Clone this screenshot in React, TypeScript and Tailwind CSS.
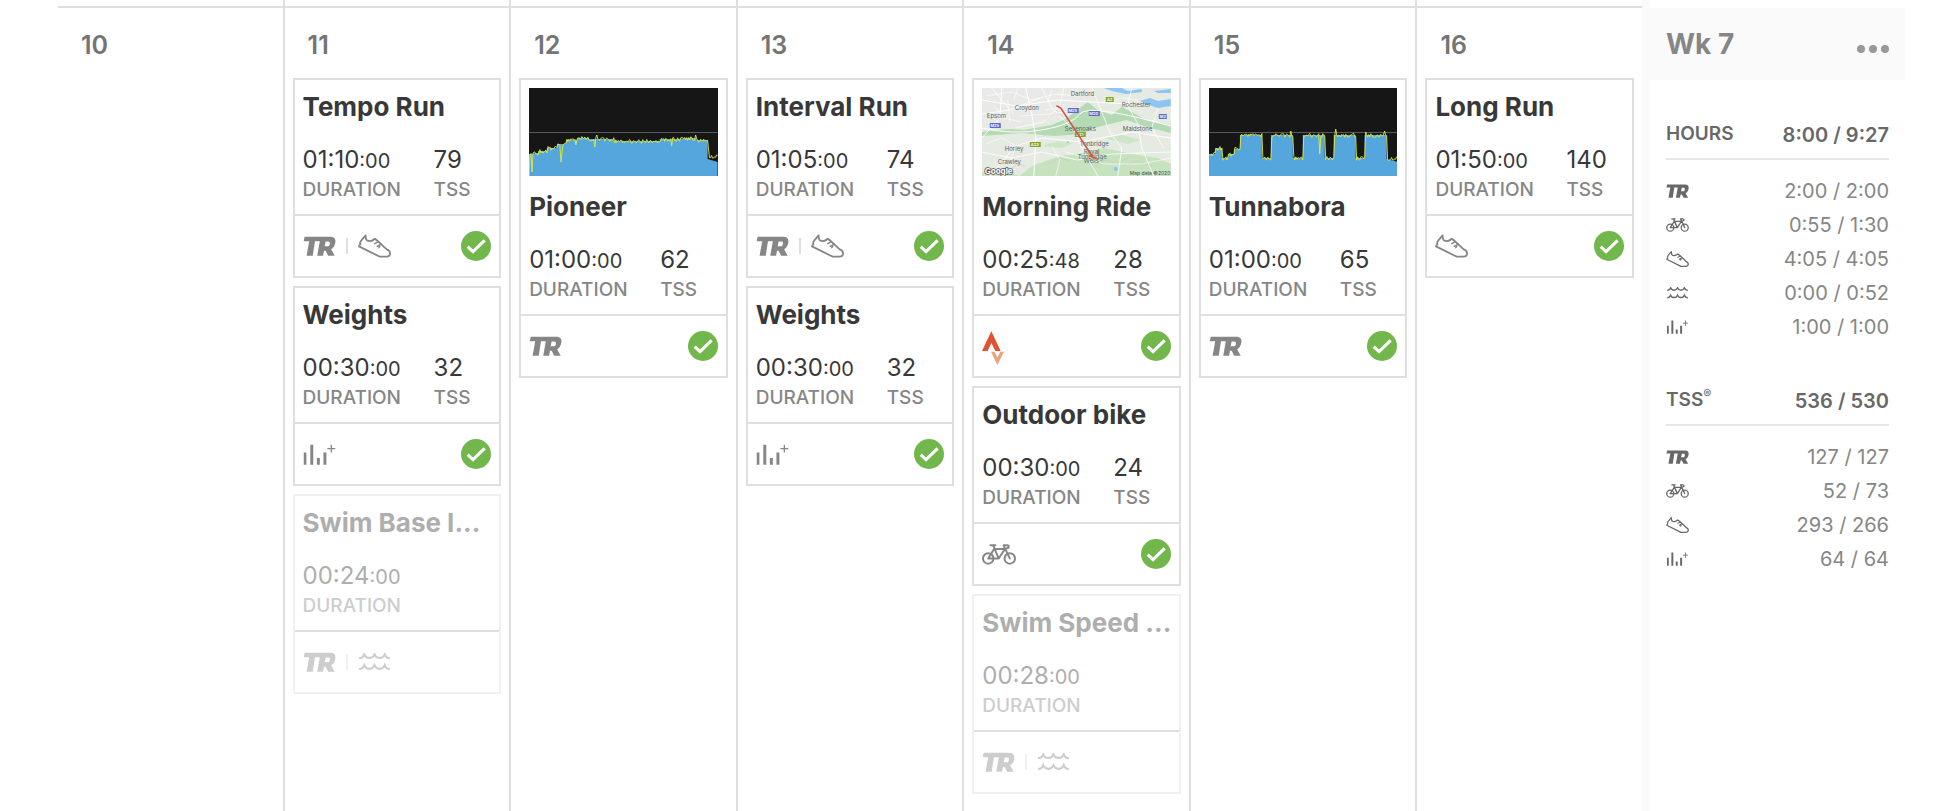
import type { ReactNode } from "react";

type IconName = "tr" | "bike" | "run" | "swim" | "weights" | "strava";

type Workout = {
  title: string;
  time: string;
  seconds: string;
  tss?: string;
  icons: IconName[];
  done: boolean;
  preview?: ReactNode;
};

function TrIcon({ className }: { className: string }) {
  return (
    <svg viewBox="0 0 100 62" className={className} fill="currentColor" fillRule="evenodd" aria-hidden="true">
      <path d="M4 2H84C96 2 101 9 99 21C97 32 93 37 86 41L97 61H77L69 46H64L61 61H43L51 16H36L29 61H10L18 16H1ZM69 17L66 32H75C80 32 82 29 82 24C83 19 81 17 77 17Z" />
    </svg>
  );
}

function RunIcon({ className }: { className: string }) {
  return (
    <svg viewBox="0 0 100 70" className={className} fill="none" stroke="currentColor" strokeWidth="5.5" strokeLinejoin="round" strokeLinecap="round" aria-hidden="true">
      <path d="M23 3C23 12 24 17 29 19C38 22 45 19 51 13L60 20L87 45C96 48 98 53 97 60C96 65 92 67 87 67H65L3 36L7 30C5 24 7 21 11 17Z" />
      <path d="M51 28L62 22M58 36L70 29M63 40L66 36" strokeWidth="4.5" />
    </svg>
  );
}

function BikeIcon({ className }: { className: string }) {
  return (
    <svg viewBox="0 0 104 64" className={className} fill="none" stroke="currentColor" strokeWidth="6" strokeLinejoin="round" strokeLinecap="round" aria-hidden="true">
      <circle cx="19" cy="44" r="16" />
      <circle cx="85" cy="44" r="16" />
      <path d="M19 44L37 15H70L51 44L34 4M26 4H41M19 44H51M85 44L66 4H77C83 4 84 13 76 13" />
    </svg>
  );
}

function SwimIcon({ className }: { className: string }) {
  return (
    <svg viewBox="0 0 100 56" className={className} fill="none" stroke="currentColor" strokeWidth="6.5" aria-hidden="true">
      <path d="M2 16C10 16 15 12 18 4C24 19 44 19 50 4C56 19 76 19 82 4C85 12 90 16 98 16" />
      <path d="M2 50C10 50 15 46 18 38C24 53 44 53 50 38C56 53 76 53 82 38C85 46 90 50 98 50" />
    </svg>
  );
}

function WeightsIcon({ className }: { className: string }) {
  return (
    <svg viewBox="0 0 100 64" className={className} fill="currentColor" aria-hidden="true">
      <path d="M2 26H10V63H2ZM22 2H31V63H22ZM42 43H51V63H42ZM62 26H71V63H62ZM84 2H88V12H98V16H88V26H84V16H74V12H84Z" />
    </svg>
  );
}

function StravaIcon({ className }: { className: string }) {
  return (
    <svg viewBox="0 0 66 102" className={className} aria-hidden="true">
      <path d="M28 1L56 60H40L28 36L17 60H0Z" fill="#e0532f" />
      <path d="M27 62H38L46 79L55 62H66L46 102Z" fill="#eca47e" />
    </svg>
  );
}

function CardIcon({ name }: { name: IconName }) {
  if (name === "tr") return <TrIcon className="h-5 w-[33px]" />;
  if (name === "bike") return <BikeIcon className="h-[21px] w-[34px]" />;
  if (name === "run") return <RunIcon className="h-6 w-[33px]" />;
  if (name === "swim") return <SwimIcon className="h-[18px] w-[33px]" />;
  if (name === "weights") return <WeightsIcon className="h-[21px] w-[33px]" />;
  return <StravaIcon className="mt-1 h-[34px] w-[22px]" />;
}

function RowIcon({ name }: { name: IconName }) {
  if (name === "tr") return <TrIcon className="h-[14px] w-[23px]" />;
  if (name === "bike") return <BikeIcon className="h-[14px] w-[23px]" />;
  if (name === "run") return <RunIcon className="h-4 w-[23px]" />;
  if (name === "swim") return <SwimIcon className="h-3 w-[23px]" />;
  return <WeightsIcon className="h-[14px] w-[23px]" />;
}

function DoneBadge() {
  return (
    <svg viewBox="0 0 90 90" className="h-[30px] w-[30px]" role="img" aria-label="Completed">
      <circle cx="45" cy="45" r="45" fill="#72b74c" />
      <path d="M20 47L36 62L71 28" fill="none" stroke="#fff" strokeWidth="9" />
    </svg>
  );
}

type Point = [number, number];

function heightAt(target: Point[], x: number) {
  for (let i = 1; i < target.length; i++) {
    const [x0, y0] = target[i - 1];
    const [x1, y1] = target[i];
    if (x <= x1 && x1 > x0) return y0 + ((y1 - y0) * (x - x0)) / (x1 - x0);
  }
  return target[target.length - 1][1];
}

function PowerChart({ target, spikes, tail }: { target: Point[]; spikes: Record<number, number>; tail: number }) {
  let seed = 11;
  const line: string[] = [];
  for (let x = 0; x <= 189; x++) {
    seed = (seed * 73 + 41) % 233;
    const base = x > 180 ? tail : heightAt(target, x);
    const y = x in spikes ? spikes[x] : base + (seed / 233 - 0.4) * 4;
    line.push(`${x},${y.toFixed(1)}`);
  }
  const area = `0,88 ${target.map((p) => p.join(",")).join(" ")} 189,88`;
  return (
    <svg viewBox="0 0 189 88" preserveAspectRatio="none" className="block h-[88px] w-full bg-[#161616]" aria-hidden="true">
      <path d="M0 44.5H189" stroke="#59595c" strokeWidth="1" />
      <polygon points={area} fill="#54a6dd" />
      <polyline points={line.join(" ")} fill="none" stroke="#e2ea38" strokeWidth="0.9" />
    </svg>
  );
}

const pioneer: Point[] = [
  [0, 66], [9, 65], [9, 63], [18, 63], [18, 60], [28, 60], [28, 56], [37, 56], [37, 52], [48, 52], [48, 50],
  [60, 50], [60, 51], [85, 51], [85, 53], [131, 53], [131, 51], [150, 51], [160, 50], [168, 50], [168, 52], [179, 52], [179, 71], [189, 74],
];

const tunnabora: Point[] = [
  [0, 66], [6, 66], [6, 60], [13, 60], [13, 70], [19, 70], [19, 66], [25, 66], [25, 61], [31, 61], [31, 47],
  [53, 47], [53, 70], [62, 70], [62, 47], [84, 47], [84, 70], [94, 70], [94, 47], [116, 47], [116, 70],
  [125, 70], [125, 47], [147, 47], [147, 70], [156, 70], [156, 47], [178, 47], [178, 71], [189, 74],
];

const places: [string, number, number][] = [
  ["Croydon", 33, 22], ["Dartford", 89, 8], ["Epsom", 5, 30], ["Rochester", 140, 19], ["Maidstone", 141, 43],
  ["Sevenoaks", 83, 43], ["Tonbridge", 98, 58], ["Royal", 102, 66], ["Tunbridge", 96, 71], ["Wells", 102, 75],
  ["Horley", 23, 63], ["Crawley", 16, 76],
];

const roads: [string, number, number, string][] = [
  ["M25", 86, 20, "#6068c8"], ["M20", 107, 23, "#6068c8"], ["M25", 8, 35, "#6068c8"], ["M2", 177, 26, "#6068c8"],
  ["A2", 124, 9, "#88a226"], ["A21", 93, 44, "#88a226"], ["A23", 48, 54, "#88a226"],
];

function RideMap() {
  return (
    <svg viewBox="0 0 189 88" preserveAspectRatio="xMidYMid slice" className="block h-[88px] w-full" role="img" aria-label="Route map">
      <rect width="189" height="88" fill="#e5ebe2" />
      <path d="M0 0H110V20L80 32L30 38L0 42Z" fill="#e9eae8" />
      <path d="M0 44Q20 40 42 42L70 37L84 31L98 20L106 14L116 22L130 27L140 19L150 24L166 33L189 37V45L165 39L145 32L128 36L112 40L100 46L72 48L40 45L0 48Z" fill="#b3dab3" />
      <path d="M38 88L50 78L78 68L98 66L122 60L150 66L176 70L189 76V88Z" fill="#c6e2bf" />
      <path d="M0 84Q14 78 26 83L38 88H0ZM60 58L76 53L92 55L80 60ZM122 50L140 47L160 52L146 56Z" fill="#cfe5c8" />
      <path d="M122 0H140L146 3L160 1V4L144 6L130 3ZM158 13L168 10L176 13L189 11V18L176 20L164 16ZM172 3L189 1V5H176Z" fill="#8cc4f4" />
      <circle cx="134" cy="81" r="2" fill="#8cc4f4" />
      <circle cx="86" cy="54" r="1" fill="#8cc4f4" />
      <g fill="none" stroke="#c6cec3" strokeWidth="0.7">
        <path d="M62 48l10-6 8 3M108 36l10-8 8 3 10-5M66 76l12-6 10 3M112 80l12-8 10 3 12-5M140 78l16-5 14 5M10 46l8-3 12 2M98 26l6-5 4 6M64 31l9-6 8 3M28 82l8-6 8 2M150 31l12 6 14 1" />
      </g>
      <g fill="none" stroke="#fff" strokeWidth="1">
        <path d="M0 40Q30 47 60 42T98 26T189 38M44 0L50 26L54 50L52 88M0 12L36 18L76 12L110 14L150 16M20 0L18 30L0 50M8 88L34 58L60 50L100 54L150 44L189 50" />
        <path d="M60 0L70 20L92 42L100 60L116 88M110 0L120 24L128 44L140 60L136 88M150 0L146 18L156 36L160 60L172 88M0 64L30 70L60 64L96 72L130 66L189 64M176 20L170 40L182 60M82 0L78 18L62 34L34 40M10 0L32 26M0 26L28 22L58 10" strokeWidth="0.8" />
        <path d="M4 8L30 4L50 12L74 6L96 8M26 12L28 34M64 22L84 18M12 18L22 30L40 34M4 56L20 50L34 58L28 76M70 58L78 72L74 88M126 14L140 10L156 12M84 64L122 76L160 76L189 70M38 28L66 26L84 24M36 0L32 12M70 2L66 14" strokeWidth="0.6" />
      </g>
      {roads.map(([label, x, y, color]) => (
        <g key={`${label}-${x}`}>
          <rect x={x} y={y} width={label.length > 2 ? 11 : 8} height="5" fill={color} />
          <text x={x + (label.length > 2 ? 5 : 4)} y={y + 4} fontSize="4" fill="#fff" textAnchor="middle" fontWeight="600">{label}</text>
        </g>
      ))}
      {places.map(([label, x, y]) => (
        <text key={label} x={x} y={y} fontSize="6" fill="#5b5f60">{label}</text>
      ))}
      <path d="M75 18L79 20L111 69M108 68L111 69L114 70" fill="none" stroke="#da4f49" strokeWidth="1.4" strokeLinejoin="round" strokeLinecap="round" />
      <text x="3" y="86" fontSize="8" fontWeight="700" fill="#fff" stroke="#555" strokeWidth="1.5" paintOrder="stroke">Google</text>
      <text x="148" y="87" fontSize="5" fill="#444">Map data ©2020</text>
    </svg>
  );
}

const weights: Workout = { title: "Weights", time: "00:30", seconds: ":00", tss: "32", icons: ["weights"], done: true };

const days: { day: number; workouts: Workout[] }[] = [
  { day: 10, workouts: [] },
  {
    day: 11,
    workouts: [
      { title: "Tempo Run", time: "01:10", seconds: ":00", tss: "79", icons: ["tr", "run"], done: true },
      weights,
      { title: "Swim Base I...", time: "00:24", seconds: ":00", icons: ["tr", "swim"], done: false },
    ],
  },
  {
    day: 12,
    workouts: [
      {
        title: "Pioneer", time: "01:00", seconds: ":00", tss: "62", icons: ["tr"], done: true,
        preview: <PowerChart target={pioneer} tail={68} spikes={{ 0: 88, 3: 84, 32: 74, 33: 66, 47: 57, 66: 59, 68: 47, 143: 58, 167: 47, 180: 62 }} />,
      },
    ],
  },
  {
    day: 13,
    workouts: [
      { title: "Interval Run", time: "01:05", seconds: ":00", tss: "74", icons: ["tr", "run"], done: true },
      weights,
    ],
  },
  {
    day: 14,
    workouts: [
      { title: "Morning Ride", time: "00:25", seconds: ":48", tss: "28", icons: ["strava"], done: true, preview: <RideMap /> },
      { title: "Outdoor bike", time: "00:30", seconds: ":00", tss: "24", icons: ["bike"], done: true },
      { title: "Swim Speed ...", time: "00:28", seconds: ":00", icons: ["tr", "swim"], done: false },
    ],
  },
  {
    day: 15,
    workouts: [
      {
        title: "Tunnabora", time: "01:00", seconds: ":00", tss: "65", icons: ["tr"], done: true,
        preview: <PowerChart target={tunnabora} tail={70} spikes={{ 82: 43, 111: 66, 127: 41, 176: 43, 157: 44 }} />,
      },
    ],
  },
  {
    day: 16,
    workouts: [{ title: "Long Run", time: "01:50", seconds: ":00", tss: "140", icons: ["run"], done: true }],
  },
];

function WorkoutCard({ workout }: { workout: Workout }) {
  const { done } = workout;
  return (
    <article className={`border-2 ${done ? "border-[#dfdfdf] text-[#383838]" : "border-[#f0f0f0] text-[#aeaeae]"}`}>
      <div className="px-2 pt-2 pb-[10px]">
        {workout.preview && <div className="mb-3">{workout.preview}</div>}
        <h3 className="overflow-hidden text-[26px] leading-[38px] font-bold whitespace-nowrap">{workout.title}</h3>
        <dl className="mt-[18px] flex">
          <div className="flex w-[131px] flex-col-reverse">
            <dt className={`text-[19px] leading-7 font-medium ${done ? "text-[#868686]" : "text-[#cdcdcd]"}`}>DURATION</dt>
            <dd className="flex h-8 items-baseline text-2xl leading-8">
              {workout.time}
              <span className="text-xl leading-7">{workout.seconds}</span>
            </dd>
          </div>
          {workout.tss && (
            <div className="flex flex-col-reverse">
              <dt className="text-[19px] leading-7 font-medium text-[#868686]">TSS</dt>
              <dd className="h-8 text-2xl leading-8">{workout.tss}</dd>
            </div>
          )}
        </dl>
      </div>
      <footer className={`flex h-[62px] items-center justify-between border-t-2 border-[#dfdfdf] px-2 ${done ? "text-[#868686]" : "text-[#cdcdcd]"}`}>
        <div className="flex items-center">
          {workout.icons.map((name, i) => (
            <div key={name} className="flex items-center">
              {i > 0 && <span className={`mx-[10px] h-4 w-0.5 ${done ? "bg-[#dfdfdf]" : "bg-[#f0f0f0]"}`} />}
              <CardIcon name={name} />
            </div>
          ))}
        </div>
        {done && <DoneBadge />}
      </footer>
    </article>
  );
}

function Summary({ heading, total, rows }: { heading: ReactNode; total: string; rows: [IconName, string, string][] }) {
  return (
    <table className="w-full border-separate border-spacing-0">
      <thead>
        <tr className="h-12 text-[#686868]">
          <th scope="col" className="border-b-2 border-[#e6e6e6] p-0 pb-0.5 text-left text-[19px] leading-7 font-semibold">{heading}</th>
          <th scope="col" className="border-b-2 border-[#e6e6e6] p-0 text-right text-xl font-semibold">{total}</th>
        </tr>
      </thead>
      <tbody>
        <tr className="h-[14px]"><td className="p-0" colSpan={2} /></tr>
        {rows.map(([name, label, value]) => (
          <tr key={name} className="h-[34px]">
            <th scope="row" aria-label={label} className="p-0 text-[#686868]"><RowIcon name={name} /></th>
            <td className="p-0 text-right text-xl text-[#868686]">{value}</td>
          </tr>
        ))}
      </tbody>
    </table>
  );
}

export default function App() {
  return (
    <div className="flex min-h-screen bg-white font-['Inter','Liberation_Sans',sans-serif]">
      <main className="grid flex-1 grid-cols-7 pl-14">
        {days.map(({ day, workouts }, i) => (
          <section key={day} className={`min-w-0 border-l-2 ${i === 0 ? "border-transparent" : "border-[#dfdfdf]"}`}>
            <div className="h-2 border-b-2 border-[#dfdfdf]" />
            <h2 className="flex h-[70px] items-center pt-[6px] pl-[23px] text-[25px] font-semibold text-[#747474]">{day}</h2>
            <div className="flex flex-col gap-2 px-2">
              {workouts.map((workout) => (
                <WorkoutCard key={workout.title} workout={workout} />
              ))}
            </div>
          </section>
        ))}
      </main>
      <aside className="flex w-[292px] shrink-0 pr-[29px]">
        <div className="w-2 bg-[#fafafa]" />
        <div className="flex-1 pt-2">
          <header className="flex h-[72px] items-center justify-between bg-[#fafafa] px-4">
            <h2 className="text-[28px] leading-9 font-bold text-[#868686]">Wk 7</h2>
            <button type="button" aria-label="Week options" className="flex items-center gap-1 pt-[10px]">
              <span className="h-2 w-2 rounded-full bg-[#999]" />
              <span className="h-2 w-2 rounded-full bg-[#999]" />
              <span className="h-2 w-2 rounded-full bg-[#999]" />
            </button>
          </header>
          <div className="flex flex-col gap-[34px] px-4 pt-8">
            <Summary
              heading="HOURS"
              total="8:00 / 9:27"
              rows={[
                ["tr", "TrainerRoad", "2:00 / 2:00"],
                ["bike", "Cycling", "0:55 / 1:30"],
                ["run", "Running", "4:05 / 4:05"],
                ["swim", "Swimming", "0:00 / 0:52"],
                ["weights", "Strength", "1:00 / 1:00"],
              ]}
            />
            <Summary
              heading={<>TSS<sup className="-top-2 text-xs font-normal">®</sup></>}
              total="536 / 530"
              rows={[
                ["tr", "TrainerRoad", "127 / 127"],
                ["bike", "Cycling", "52 / 73"],
                ["run", "Running", "293 / 266"],
                ["weights", "Strength", "64 / 64"],
              ]}
            />
          </div>
        </div>
      </aside>
    </div>
  );
}
